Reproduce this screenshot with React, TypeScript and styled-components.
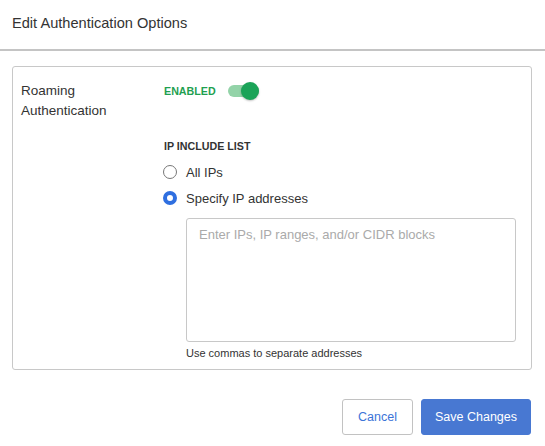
import React, { useState } from "react";
import styled, { createGlobalStyle } from "styled-components";

const Global = createGlobalStyle`
  html, body { margin: 0; padding: 0; background: #fff; }
  body { font-family: "Liberation Sans", Arial, sans-serif; color: #333; }
  * { box-sizing: border-box; }
`;

const Modal = styled.div`
  width: 545px;
  height: 446px;
  display: flex;
  flex-direction: column;
  background: #fff;
`;

const Header = styled.div`
  height: 51px;
  padding: 14px 12px 0;
  border-bottom: 2px solid #c4c4c4;
  font-size: 14.6px;
  line-height: 18px;
  color: #333;
`;

const Body = styled.div`
  padding: 15px 13px 0 12px;
`;

const Card = styled.div`
  border: 1px solid #c8c8c8;
  border-radius: 3px;
  height: 304px;
  padding: 14px 8px 0 8px;
  display: grid;
  grid-template-columns: 143px 1fr;
`;

const Label = styled.div`
  font-size: 13.5px;
  line-height: 20px;
  color: #333;
`;

const Content = styled.div`
  display: flex;
  flex-direction: column;
`;

const ToggleRow = styled.div`
  display: flex;
  align-items: center;
  gap: 12px;
  height: 20px;
`;

const Status = styled.span<{ $on: boolean }>`
  font-size: 10.7px;
  font-weight: 700;
  letter-spacing: 0;
  color: ${(p) => (p.$on ? "#1fa050" : "#888")};
`;

const Track = styled.button<{ $on: boolean }>`
  position: relative;
  width: 31px;
  height: 12px;
  border-radius: 6px;
  border: none;
  padding: 0;
  background: ${(p) => (p.$on ? "#93d3a8" : "#ccc")};
  cursor: pointer;
`;

const Knob = styled.span<{ $on: boolean }>`
  position: absolute;
  top: -3px;
  left: ${(p) => (p.$on ? "13px" : "-2px")};
  width: 18px;
  height: 18px;
  border-radius: 50%;
  background: ${(p) => (p.$on ? "#1ba358" : "#f5f5f5")};
  box-shadow: 0 1px 2px rgba(0, 0, 0, 0.25);
`;

const SectionTitle = styled.div`
  margin-top: 38px;
  font-size: 10.7px;
  font-weight: 700;
  line-height: 14px;
  color: #333;
`;

const RadioList = styled.div`
  margin-top: 11px;
  display: flex;
  flex-direction: column;
  gap: 10px;
`;

const RadioRow = styled.label`
  display: flex;
  align-items: center;
  gap: 9px;
  height: 16px;
  margin-left: -1px;
  font-size: 13px;
  color: #333;
  cursor: pointer;
`;

const RadioDot = styled.span<{ $checked: boolean }>`
  width: 14px;
  height: 14px;
  border-radius: 50%;
  flex: none;
  ${(p) =>
    p.$checked
      ? `background: #fff; border: 4px solid #2f6fe0;`
      : `background: #fff; border: 1.5px solid #777;`}
`;

const Field = styled.div`
  margin-top: 12px;
  margin-left: 22px;
  width: 330px;
  display: flex;
  flex-direction: column;
`;

const TextArea = styled.textarea`
  height: 124px;
  width: 100%;
  resize: none;
  border: 1px solid #c8c8c8;
  border-radius: 3px;
  padding: 7px 12px;
  font-family: "Liberation Sans", Arial, sans-serif;
  font-size: 13px;
  line-height: 18px;
  color: #333;
  outline: none;
  &::placeholder { color: #aaa; }
`;

const Help = styled.div`
  margin-top: 4px;
  font-size: 11px;
  line-height: 14px;
  color: #333;
`;

const Footer = styled.div`
  display: flex;
  justify-content: flex-end;
  gap: 8px;
  padding: 29px 14px 0 0;
`;

const Button = styled.button<{ $primary?: boolean }>`
  height: 36px;
  border-radius: 3px;
  font-family: "Liberation Sans", Arial, sans-serif;
  font-size: 12.5px;
  cursor: pointer;
  padding: 0 ${(p) => (p.$primary ? "13px" : "15px")};
  border: 1px solid ${(p) => (p.$primary ? "#4878d2" : "#c2c2c2")};
  background: ${(p) => (p.$primary ? "#4878d2" : "#fff")};
  color: ${(p) => (p.$primary ? "#fff" : "#3c74d8")};
`;

export default function App() {
  const [on, setOn] = useState(true);
  const [mode, setMode] = useState<"all" | "specify">("specify");
  return (
    <Modal>
      <Global />
      <Header>Edit Authentication Options</Header>
      <Body>
        <Card>
          <Label>
            Roaming
            <br />
            Authentication
          </Label>
          <Content>
            <ToggleRow>
              <Status $on={on}>{on ? "ENABLED" : "DISABLED"}</Status>
              <Track $on={on} onClick={() => setOn(!on)}>
                <Knob $on={on} />
              </Track>
            </ToggleRow>
            <SectionTitle>IP INCLUDE LIST</SectionTitle>
            <RadioList>
              <RadioRow onClick={() => setMode("all")}>
                <RadioDot $checked={mode === "all"} />
                All IPs
              </RadioRow>
              <RadioRow onClick={() => setMode("specify")}>
                <RadioDot $checked={mode === "specify"} />
                Specify IP addresses
              </RadioRow>
            </RadioList>
            <Field>
              <TextArea placeholder="Enter IPs, IP ranges, and/or CIDR blocks" />
              <Help>Use commas to separate addresses</Help>
            </Field>
          </Content>
        </Card>
      </Body>
      <Footer>
        <Button>Cancel</Button>
        <Button $primary>Save Changes</Button>
      </Footer>
    </Modal>
  );
}
